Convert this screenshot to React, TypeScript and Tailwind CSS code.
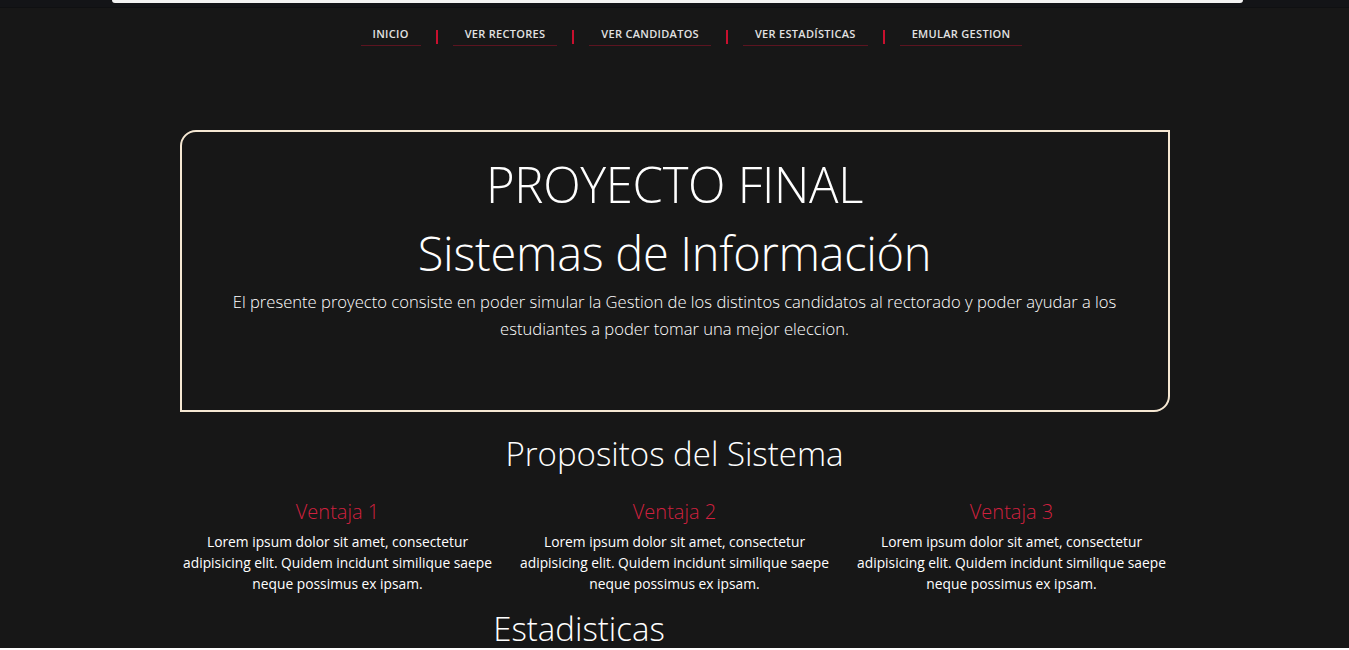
const links = ["Inicio", "Ver Rectores", "Ver Candidatos", "Ver Estadísticas", "Emular Gestion"];

const ventajas = ["Ventaja 1", "Ventaja 2", "Ventaja 3"];

function TopBar() {
  return (
    <div className="h-[8px] bg-[#131417] border-b border-[#0f1012] flex justify-center pl-[6px]">
      <div className="w-[1131px] h-[3px] bg-[#f3f3f3] rounded-b-[10px]" />
    </div>
  );
}

function Nav() {
  return (
    <nav className="flex justify-center items-center pt-[19px] pl-[34px]">
      {links.map((l, i) => (
        <div key={l} className="flex items-center">
          {i > 0 && <span className="w-[2px] h-[14px] bg-[#c8102e] mx-[15px]" />}
          <a className="px-[12px] pb-[5px] border-b border-[#5c1420] text-[11px] font-semibold uppercase tracking-[0.3px] text-[#e2e2e2] leading-[13px]">
            {l}
          </a>
        </div>
      ))}
    </nav>
  );
}

export default function App() {
  return (
    <div className="h-[648px] overflow-hidden bg-[#171717] text-white font-['Open_Sans',sans-serif]">
      <TopBar />
      <Nav />

      <section className="mt-[84px] mx-auto w-[990px] h-[282px] border-2 border-[#f6e8d3] rounded-tl-[16px] rounded-br-[16px] flex flex-col items-center pt-[20px]">
        <h1 className="text-[49px] font-light leading-[64px] tracking-[-0.3px]">PROYECTO FINAL</h1>
        <h2 className="text-[47px] font-light leading-[74px] tracking-[-0.3px]">Sistemas de Información</h2>
        <p className="mt-[-2px] w-[900px] text-center text-[16.6px] font-light leading-[27px]">
          El presente proyecto consiste en poder simular la Gestion de los distintos candidatos al rectorado y poder ayudar a los estudiantes a poder tomar una mejor eleccion.
        </p>
      </section>

      <h2 className="mt-[20px] text-center text-[33px] font-light leading-[44px]">Propositos del Sistema</h2>

      <div className="mx-auto w-[1011px] grid grid-cols-3 mt-[21px]">
        {ventajas.map((v) => (
          <div key={v} className="flex flex-col items-center text-center">
            <h3 className="text-[20px] font-light text-[#d0213f] leading-[30px]">{v}</h3>
            <p className="mt-[4px] max-w-[316px] text-[13.8px] leading-[21px] text-white">
              Lorem ipsum dolor sit amet, consectetur adipisicing elit. Quidem incidunt similique saepe neque possimus ex ipsam.
            </p>
          </div>
        ))}
      </div>

      <div className="mx-auto w-[1011px] mt-[13px]">
        <h2 className="w-[820px] text-center text-[33px] font-light leading-[44px]">Estadisticas</h2>
      </div>
    </div>
  );
}
